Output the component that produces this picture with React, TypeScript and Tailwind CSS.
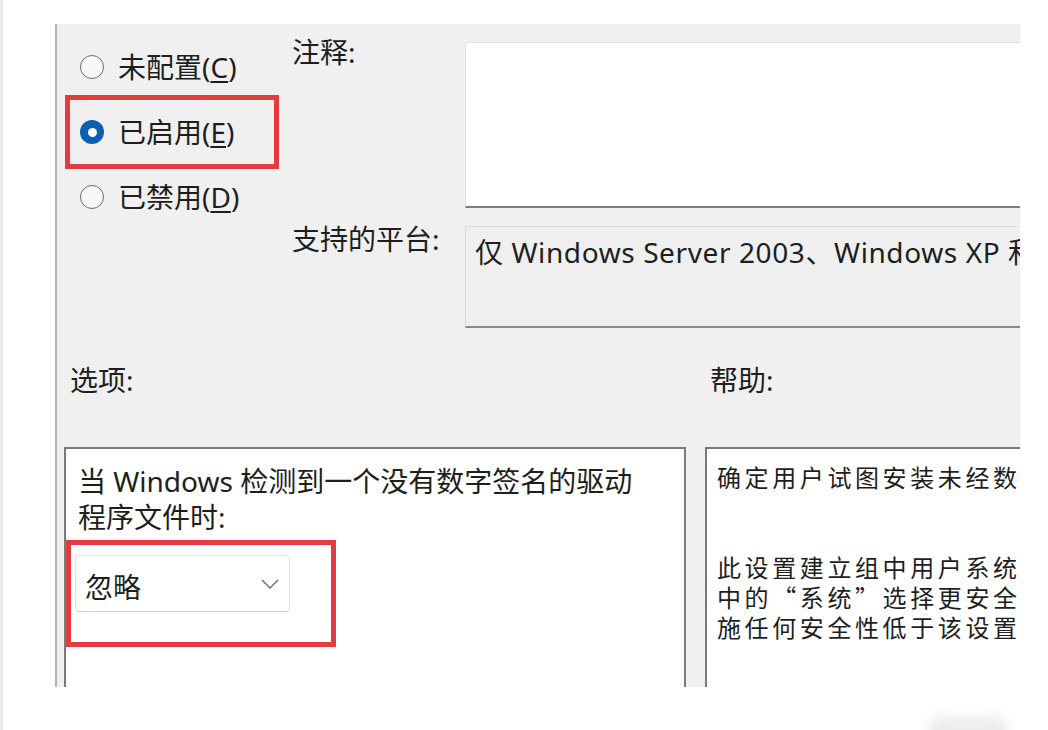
const FONT = "font-['Noto_Sans','Noto_Sans_CJK_SC',sans-serif]";

function Radio({ checked, label, mnemonic }: { checked?: boolean; label: string; mnemonic: string }) {
  return (
    <div className="flex h-[40px] items-center gap-[14px]">
      {checked ? (
        <span className="flex h-[24px] w-[24px] shrink-0 items-center justify-center rounded-full bg-[#0b5fb5]">
          <span className="h-[9px] w-[9px] rounded-full bg-white" />
        </span>
      ) : (
        <span className="h-[24px] w-[24px] shrink-0 rounded-full border-[1.5px] border-[#6a6a6a] bg-[#f7f7f7]" />
      )}
      <span className="whitespace-nowrap">
        {label}(<span className="underline underline-offset-[3px]">{mnemonic}</span>)
      </span>
    </div>
  );
}

export default function App() {
  return (
    <div
      className={`relative h-[730px] w-[1048px] overflow-hidden border-l-[3px] border-[#ececec] bg-white text-[28px] leading-[36px] text-[#1e1e1e] ${FONT}`}
    >
      <div className="ml-[52px] mt-[24px] h-[663px] w-[965px] overflow-hidden border-l-2 border-[#b4b4b4] bg-[#f0f0f0]">
        {/* state + comment + platform */}
        <div className="flex h-[304px]">
          <div className="flex w-[235px] shrink-0 flex-col gap-[25px] pl-[23px] pt-[23px]">
            <Radio label="未配置" mnemonic="C" />
            <Radio checked label="已启用" mnemonic="E" />
            <Radio label="已禁用" mnemonic="D" />
          </div>

          <div className="flex shrink-0 flex-col">
            <div className="flex">
              <div className="w-[173px] shrink-0 pt-[10px]">注释:</div>
              <div className="mt-[18px] h-[166px] w-[600px] shrink-0 border border-[#e2e2e2] border-b-2 border-b-[#7e7e7e] bg-white" />
            </div>
            <div className="mt-[13px] flex">
              <div className="w-[173px] shrink-0 whitespace-nowrap">支持的平台:</div>
              <div className="mt-[5px] h-[102px] w-[600px] shrink-0 whitespace-nowrap border border-[#dcdcdc] border-b-2 border-b-[#8a8a8a] bg-[#efefef] pl-[9px] pt-[7px] tracking-[0.6px]">
                仅 Windows Server 2003、Windows XP 和 Windows 2000
              </div>
            </div>
          </div>
        </div>

        {/* section labels */}
        <div className="mt-[34px] flex">
          <div className="w-[653px] shrink-0 pl-[13px]">选项:</div>
          <div className="shrink-0">帮助:</div>
        </div>

        {/* options + help */}
        <div className="mt-[49px] flex">
          <div className="ml-[7px] h-[300px] w-[622px] shrink-0 border-2 border-[#7a7a7a] bg-white pl-[9px] pt-[14px]">
            <div className="ml-[3px] whitespace-nowrap">当 Windows 检测到一个没有数字签名的驱动</div>
            <div className="ml-[3px]">程序文件时:</div>
            <div className="mt-[20px] flex h-[57px] w-[215px] items-center justify-between rounded-[4px] border border-[#e3e3e3] border-b-[#cdcdcd] bg-white pl-[9px] pr-[10px]">
              <span className="pt-[6px]">忽略</span>
              <svg width="18" height="10" viewBox="0 0 18 10" fill="none">
                <path d="M1 1l8 8 8-8" stroke="#6a6a6a" strokeWidth="1.4" />
              </svg>
            </div>
          </div>

          <div className="ml-[19px] h-[300px] w-[400px] shrink-0 whitespace-nowrap border-2 border-[#7a7a7a] bg-white pl-[10px] pt-[13px] font-['Noto_Sans_CJK_SC',sans-serif] text-[24px] leading-[30px] tracking-[3.6px]">
            <div>确定用户试图安装未经数字签名的设备驱动程序时系统如何响应。</div>
            <div className="mt-[60px]">此设置建立组中用户系统上的最低响应。用户可以使用控制面板</div>
            <div>中的“系统”选择更安全的设置，但当此设置启用时，系统不实</div>
            <div>施任何安全性低于该设置的设置。</div>
          </div>
        </div>
      </div>

      {/* annotation boxes */}
      <div className="absolute left-[62px] top-[95px] h-[74px] w-[214px] border-[5px] border-[#e53a3f]" />
      <div className="absolute left-[63px] top-[540px] h-[107px] w-[270px] border-[5px] border-[#e53a3f]" />

      {/* faint shadow at bottom right */}
      <div className="absolute left-[925px] top-[716px] h-[30px] w-[80px] rounded-full bg-[#ececec] blur-[6px]" />
    </div>
  );
}
